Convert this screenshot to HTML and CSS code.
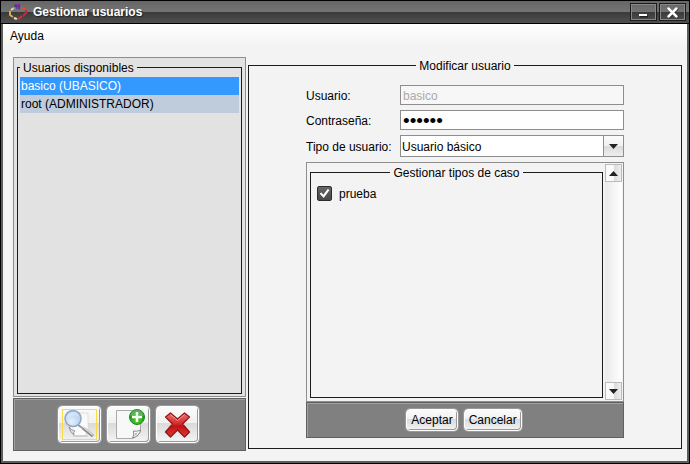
FILE: index.html
```html
<!DOCTYPE html>
<html lang="es">
<head>
<meta charset="utf-8">
<title>Gestionar usuarios</title>
<link rel="stylesheet" href="styles.css">
</head>
<body>
<div class="window">
  <header class="titlebar">
    <svg class="app-icon" width="18" height="18" viewBox="0 0 18 18" fill="none" stroke-width="2">
      <path d="M5 3h6M7 1v5M10 1v5" stroke="#6a2f9a"/>
      <path d="M5 5L2 7" stroke="#e8d8b0"/>
      <path d="M1 8v4l3 2" stroke="#d8ae45"/>
      <path d="M12 5l4 1" stroke="#d9503c"/>
      <path d="M17 7v3l-3 3" stroke="#cf2436"/>
      <path d="M5 15l3 1" stroke="#e5e5e5"/>
      <path d="M8 17l5-4" stroke="#d53227"/>
      <path d="M5 6l2-1" stroke="#57a04a"/>
    </svg>
    <h1 class="title">Gestionar usuarios</h1>
    <button class="win-btn" type="button" aria-label="Minimizar">
      <svg width="25" height="16" viewBox="0 0 25 16"><path d="M9 12.500h8" stroke="#222" stroke-width="2"/><path d="M8 11h8" stroke="#fff" stroke-width="2"/></svg>
    </button>
    <button class="win-btn" type="button" aria-label="Cerrar">
      <svg width="25" height="16" viewBox="0 0 25 16" stroke-linecap="round"><path d="M9 5l8 8M17 5l-8 8" stroke="#222" stroke-width="3"/><path d="M8.500 4.500l8 8M16.500 4.500l-8 8" stroke="#fff" stroke-width="2.500"/></svg>
    </button>
  </header>
  <div class="client">
    <nav class="menubar"><button class="menu" type="button">Ayuda</button></nav>
    <main class="main">
      <section class="side">
        <div class="side-panel">
          <fieldset class="group">
            <legend>Usuarios disponibles</legend>
            <ul class="users" role="listbox" aria-label="Usuarios disponibles">
              <li class="user selected" role="option" aria-selected="true" tabindex="0">basico (UBASICO)</li>
              <li class="user" role="option" aria-selected="false">root (ADMINISTRADOR)</li>
            </ul>
          </fieldset>
        </div>
        <div class="toolbar tools">
          <button class="btn tool" type="button" aria-label="Ver usuario">
            <svg width="37" height="33" viewBox="0 0 37 33">
              <defs>
                <linearGradient id="page" x1="0" y1="0" x2="1" y2="1"><stop offset="0" stop-color="#f3f3f3"/><stop offset="1" stop-color="#fff"/></linearGradient>
                <radialGradient id="lens" cx=".4" cy=".7" r=".8"><stop offset="0" stop-color="#e4f0fc"/><stop offset="1" stop-color="#a9c7ea"/></radialGradient>
              </defs>
              <path d="M9 5h18v19l-4 4H14q-4-1-5-5z" fill="url(#page)" stroke="#d4d4d4" stroke-width=".7"/>
              <path d="M8 19q1 5 5 8-1-3 1-4-4-1-6-4z" fill="#ddd" stroke="#888" stroke-width=".8"/>
              <path d="M12 28h15" stroke="#bbb"/>
              <path d="M17 17l6 4" stroke="#999" stroke-width="2"/>
              <path d="M22 20l10 8" stroke="#8d8d8d" stroke-width="3.500"/>
              <path d="M22 19l10 8" stroke="#ddd" stroke-width="1.500"/>
              <circle cx="12" cy="10.500" r="8" fill="url(#lens)" stroke="#8da6c3" stroke-width="1.500"/>
              <path d="M6 10q1-6 7-6 4 0 5 4-7-2-12 2z" fill="#fff" opacity=".35"/>
              <rect x="1.500" y="1.500" width="34" height="30" fill="none" stroke="#fbe88a"/>
              <rect x="1.500" y="1.500" width="34" height="30" fill="none" stroke="#f5cf00" stroke-dasharray="1 1"/>
            </svg>
          </button>
          <button class="btn tool" type="button" aria-label="Nuevo usuario">
            <svg width="37" height="33" viewBox="0 0 37 33">
              <defs><radialGradient id="plus" cx=".5" cy=".75" r=".75"><stop offset="0" stop-color="#4fd028"/><stop offset="1" stop-color="#168818"/></radialGradient></defs>
              <path d="M6.500 2.500h24v21q-2 5-8 7h-16z" fill="#f8f8f8" stroke="#aaa"/>
              <path d="M22.500 30q2-3 1-7 3 1 7-1-1 6-8 8z" fill="#fff" stroke="#888"/>
              <path d="M24 28q1-2 1-3 2 0 3-1-1 3-4 4z" fill="#bbb"/>
              <circle cx="27" cy="9" r="7.500" fill="url(#plus)" stroke="#168a1c"/>
              <path d="M20.500 8a6.500 6.500 0 0 1 13 0q-6-3-13 0z" fill="#fff" opacity=".25"/>
              <path d="M27 4v10M22 9h10" stroke="#fff" stroke-width="2.500"/>
            </svg>
          </button>
          <button class="btn tool" type="button" aria-label="Eliminar usuario">
            <svg width="37" height="33" viewBox="0 0 37 33">
              <defs><linearGradient id="cross" x1="0" y1="0" x2="0" y2="1"><stop offset="0" stop-color="#e97474"/><stop offset=".45" stop-color="#d52b2b"/><stop offset=".55" stop-color="#c01313"/><stop offset="1" stop-color="#e03a3a"/></linearGradient></defs>
              <path d="M11.500 5l7 6 7-6 5 4-7 7 7 8-5 5-7-7-7 7-5-5 7-8-7-7z" fill="url(#cross)" stroke="#961414" stroke-width="1.300" stroke-linejoin="round"/>
              <path d="M11.500 6.500l7 6 7-6" fill="none" stroke="#f4a9a9" stroke-width=".8"/>
            </svg>
          </button>
        </div>
      </section>

      <fieldset class="group editor">
        <legend>Modificar usuario</legend>
        <form class="form">
          <div class="fields">
            <label for="user">Usuario:</label>
            <input class="field" id="user" type="text" value="basico" disabled>
            <label for="pass">Contraseña:</label>
            <input class="field password" id="pass" type="password" value="basico">
            <label for="type">Tipo de usuario:</label>
            <div class="combo">
              <select id="type"><option>Usuario básico</option><option>Administrador</option></select>
              <span class="combo-arrow"><svg width="9" height="5" viewBox="0 0 9 5"><path d="M0 0h9L4.500 5z" fill="#222"/></svg></span>
            </div>
          </div>
          <div class="scroll">
            <fieldset class="group cases">
              <legend>Gestionar tipos de caso</legend>
              <label class="check"><input type="checkbox" checked><span>prueba</span></label>
            </fieldset>
            <div class="scrollbar">
              <button class="scroll-btn" type="button" aria-label="Subir"><svg width="9" height="5" viewBox="0 0 9 5"><path d="M0 5h9L4.500 0z" fill="#222"/></svg></button>
              <button class="scroll-btn" type="button" aria-label="Bajar"><svg width="9" height="5" viewBox="0 0 9 5"><path d="M0 0h9L4.500 5z" fill="#222"/></svg></button>
            </div>
          </div>
          <div class="toolbar actions">
            <button class="btn" type="button">Aceptar</button>
            <button class="btn" type="button">Cancelar</button>
          </div>
        </form>
      </fieldset>
    </main>
  </div>
</div>
</body>
</html>
```

FILE: styles.css
```css
* { box-sizing: border-box; }

body {
  margin: 0;
  font: 12px/15px "Liberation Sans", Arial, sans-serif;
  color: #000;
}

button, input, select { font: inherit; color: inherit; margin: 0; }
svg { display: block; }

.window {
  display: flex;
  flex-direction: column;
  height: 100vh;
  border: 1px solid #000;
}

.titlebar {
  display: flex;
  align-items: center;
  gap: 2px;
  height: 23px;
  padding: 0 3px 0 8px;
  border-bottom: 1px solid #000;
  background: linear-gradient(#666 0, #747474 11px, #3a3a3a 11px, #505050 100%);
}

.title {
  flex: 1;
  margin: 0 0 0 4px;
  padding-top: 1px;
  font-size: 12px;
  line-height: 15px;
  color: #fff;
  text-shadow: 1px 1px 1px #222;
}

.win-btn {
  width: 27px;
  height: 18px;
  padding: 0;
  border: 1px solid #1c1c1c;
  background: linear-gradient(#686868 0, #747474 50%, #3a3a3a 50%, #4c4c4c 100%);
  box-shadow: inset 0 0 0 1px #888;
}

.client {
  flex: 1;
  display: flex;
  flex-direction: column;
  min-height: 0;
  border: 2px solid #5c5c5c;
  border-top: 0;
  background: linear-gradient(#fff, #f3f3f3 24px);
}

.menubar { padding: 4px 7px 5px; }
.menu { display: block; padding: 0; border: 0; background: none; line-height: 16px; }

.main {
  flex: 1;
  display: grid;
  grid-template-columns: 233px 1fr;
  gap: 2px;
  min-height: 0;
  padding: 8px 5px 10px 10px;
}

.side { display: flex; flex-direction: column; min-height: 0; }

.side-panel {
  flex: 1;
  display: flex;
  padding: 2px 3px;
  border: 1px solid #8e8e8e;
  background: #e2e2e2;
}

.group {
  min-width: 0;
  margin: 0;
  padding: 0;
  border: 1px solid #1c1c1c;
}

.group > legend { padding: 1px 3px 0; line-height: 14px; }
.side-panel .group { flex: 1; }
.side-panel legend { margin-left: 2px; }

.users { margin: 2px; padding: 0; list-style: none; }
.user { padding: 2px 1px 1px; background: #bfccdb; }
.user.selected { background: #3399ff; color: #fff; }

.toolbar {
  display: flex;
  align-items: center;
  justify-content: center;
  border: 1px solid #606060;
  background: #808080;
  box-shadow: inset 1px 1px 0 #a0a0a0;
}

.tools { gap: 6px; height: 53px; margin-top: 1px; padding-right: 2px; }

.btn {
  padding: 3px 4px 2px;
  border: 1px solid #fff;
  border-radius: 4px;
  background: linear-gradient(#fbfbfb 0, #f1f1f1 46%, #dadada 46%, #f4f4f4 100%);
  box-shadow: inset -1px -1px 0 #999, 0 0 0 1px #999;
}

.tool { display: grid; place-items: center; width: 43px; height: 37px; padding: 0; }

.editor { margin: 1px 0 2px; }
.editor > legend, .cases > legend { margin: 0 auto; }

.form {
  display: flex;
  flex-direction: column;
  height: 100%;
  padding: 12px 57px 10px;
}

.fields {
  display: grid;
  grid-template-columns: 94px 1fr;
  gap: 5px 0;
  align-items: center;
  white-space: nowrap;
}

.fields label { padding-top: 2px; }

.field {
  width: 100%;
  height: 20px;
  padding: 2px 2px 0;
  border: 1px solid #8e8e8e;
  background: #fff;
}

.field:disabled { background: #f7f7f7; color: #aaa; }
.password { font-size: 19px; line-height: 18px; }

.combo { position: relative; height: 22px; }

.combo select {
  width: 100%;
  height: 100%;
  padding: 2px 22px 0 1px;
  border: 1px solid #8e8e8e;
  border-radius: 0;
  background: #fff;
  appearance: none;
}

.combo-arrow {
  position: absolute;
  inset: 1px 1px 1px auto;
  display: grid;
  place-items: center;
  width: 20px;
  border-left: 1px solid #8e8e8e;
  background: linear-gradient(#fbfbfb, #f0f0f0 50%, #dadada 50%, #eee);
  pointer-events: none;
}

.scroll {
  flex: 1;
  display: flex;
  gap: 2px;
  min-height: 0;
  margin-top: 5px;
  padding: 1px 1px 3px 3px;
  border: 1px solid #8e8e8e;
}

.cases { flex: 1; margin-top: 1px; }

.check { display: flex; align-items: center; gap: 7px; padding: 5px 6px; }
.check span { padding-top: 2px; }

.check input {
  appearance: none;
  width: 15px;
  height: 15px;
  border: 1px solid #2c2c2c;
  border-radius: 2px;
  background: linear-gradient(#666, #484848);
  display: grid;
  place-items: center;
}

.check input:checked::before {
  content: "";
  width: 10px;
  height: 9px;
  background: #fff;
  clip-path: polygon(0 50%, 20% 40%, 38% 65%, 82% 0, 100% 12%, 42% 100%);
}

.scrollbar {
  display: flex;
  flex-direction: column;
  justify-content: space-between;
  width: 17px;
  margin-bottom: -2px;
  background: linear-gradient(90deg, #eaeaea, #fff);
}

.scroll-btn {
  display: grid;
  place-items: center;
  height: 18px;
  padding: 0;
  border: 1px solid #bbb;
  background: linear-gradient(90deg, #fafafa 50%, #dadada 50%, #eee);
}

.actions { gap: 6px; height: 36px; padding: 0 2px 1px 0; }
```
